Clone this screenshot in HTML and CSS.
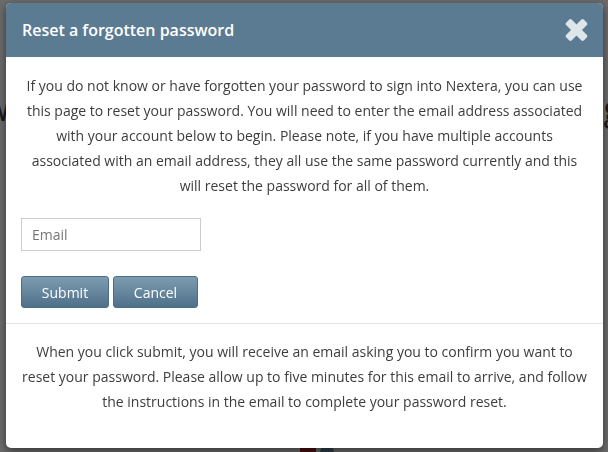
FILE: index.html
```html
<!DOCTYPE html>
<html>
<head>
<meta charset="utf-8">
<link rel="stylesheet" href="styles.css">
</head>
<body>
<div class="backdrop">
  <div class="bg-heading"><span class="bg-left">W</span><span class="bg-right">g</span></div>
  <div class="bg-bottom"><span class="bg-red"></span><span class="bg-blue"></span></div>
</div>
<div class="modal">
  <div class="modal-header">
    <h1 class="modal-title">Reset a forgotten password</h1>
    <button class="close" aria-label="Close">
      <svg width="23" height="24" viewBox="0 0 23 24">
        <g transform="translate(11.5 12)">
          <rect x="-12.5" y="-3.9" width="25" height="7.8" rx="2" fill="#dfe6ea" transform="rotate(45)"/>
          <rect x="-12.5" y="-3.9" width="25" height="7.8" rx="2" fill="#dfe6ea" transform="rotate(-45)"/>
        </g>
      </svg>
    </button>
  </div>
  <div class="modal-body">
    <p class="intro">If you do not know or have forgotten your password to sign into Nextera, you can use this page to reset your password. You will need to enter the email address associated with your account below to begin. Please note, if you have multiple accounts associated with an email address, they all use the same password currently and this will reset the password for all of them.</p>
    <input class="email" type="text" placeholder="Email">
    <div class="actions">
      <button class="btn btn-submit">Submit</button>
      <button class="btn btn-cancel">Cancel</button>
    </div>
  </div>
  <div class="modal-footer">
    <p class="note">When you click submit, you will receive an email asking you to confirm you want to reset your password. Please allow up to five minutes for this email to arrive, and follow the instructions in the email to complete your password reset.</p>
  </div>
</div>
</body>
</html>
```
FILE: styles.css
```css
* { box-sizing: border-box; }
html, body {
  margin: 0;
  padding: 0;
  width: 608px;
  height: 452px;
  overflow: hidden;
  background: #6b6b6b;
  font-family: "Open Sans", "DejaVu Sans", sans-serif;
}
.backdrop {
  height: 452px;
  display: flex;
  flex-direction: column;
  justify-content: space-between;
}
.bg-heading {
  margin-top: 88px;
  display: flex;
  justify-content: space-between;
  font-size: 34px;
  line-height: 40px;
  color: #1b1b1b;
}
.bg-left { margin-left: -20px; }
.bg-right { margin-right: -14px; }
.bg-bottom {
  display: flex;
  gap: 4px;
  padding-left: 300px;
  height: 6px;
}
.bg-red { width: 16px; height: 6px; background: #4a1010; }
.bg-blue { width: 14px; height: 6px; background: #2f3e47; border-radius: 7px 7px 0 0; }

.modal {
  position: fixed;
  left: 6px;
  top: 3px;
  width: 597px;
  height: 445px;
  background: #fff;
  border-radius: 5px;
  box-shadow: 0 3px 9px rgba(0,0,0,0.5);
  overflow: hidden;
  display: flex;
  flex-direction: column;
}
.modal-header {
  height: 54px;
  background: #5b7b92;
  display: flex;
  align-items: center;
  justify-content: space-between;
  padding: 0 15px 0 16px;
}
.modal-title {
  margin: 0;
  color: #fff;
  font-size: 16px;
  font-weight: 600;
  line-height: 22px;
}
.close {
  border: 0;
  background: none;
  padding: 0;
  width: 23px;
  height: 24px;
  display: flex;
}
.modal-body {
  padding: 16px 15px 15px;
  border-bottom: 1px solid #e5e5e5;
}
.intro, .note {
  margin: 0;
  text-align: center;
  font-size: 14px;
  line-height: 25px;
  color: #3d3d3d;
}
.email {
  display: block;
  margin-top: 20px;
  width: 180px;
  height: 33px;
  border: 1px solid #cccccc;
  border-radius: 0;
  padding: 0 10px;
  font-family: "Open Sans", sans-serif;
  font-size: 14px;
  color: #555;
  outline: none;
}
.email::placeholder { color: #777; }
.actions {
  margin-top: 25px;
  display: flex;
  gap: 4px;
}
.btn {
  height: 32px;
  border: 1px solid #4d6d85;
  border-radius: 3px;
  background: linear-gradient(#7d9cb1, #4e7089);
  color: #fff;
  font-family: "Open Sans", sans-serif;
  font-size: 14px;
  padding: 0;
}
.btn-submit { width: 88px; }
.btn-cancel { width: 85px; }
.modal-footer {
  padding: 15px 15px;
}
```
